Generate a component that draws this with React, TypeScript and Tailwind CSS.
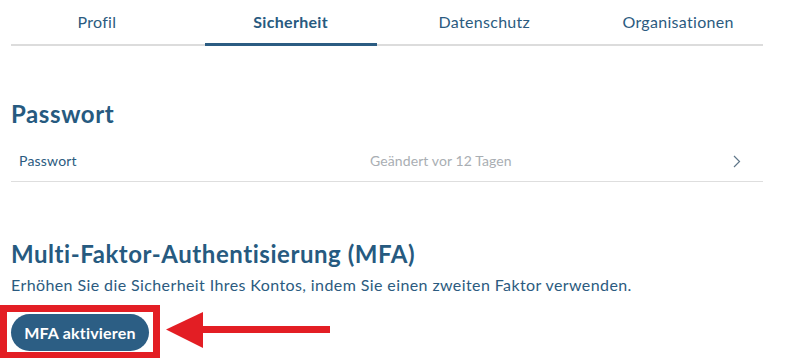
import React from "react";

const tabs = ["Profil", "Sicherheit", "Datenschutz", "Organisationen"];

export default function App() {
  return (
    <div
      className="relative w-[792px] h-[364px] bg-white overflow-hidden text-[#2b5b80]"
      style={{ fontFamily: "Lato, 'Noto Sans', sans-serif" }}
    >
      {/* Tabs */}
      <div className="ml-[11px] w-[752px] border-b-2 border-[#dcdcdc]">
        <div className="-ml-[11px] w-[775px] flex -mb-[2px]">
          {tabs.map((t, i) => (
            <div key={t} className="flex-1 flex flex-col items-center">
              <div
                className={`pt-[10px] h-[43px] text-[16px] leading-[24px] tracking-[0.3px] ${
                  i === 1 ? "font-bold text-[#285a80]" : "font-normal"
                }`}
              >
                {t}
              </div>
              <div
                className={`self-stretch mx-[11px] h-[3px] ${
                  i === 1 ? "bg-[#2b5c82]" : "bg-transparent"
                }`}
              />
            </div>
          ))}
        </div>
      </div>

      {/* Passwort section */}
      <div className="px-[11px] w-[774px]">
        <h2 className="mt-[53px] text-[24px] leading-[30px] font-bold tracking-[0.6px] text-[#265a80]">
          Passwort
        </h2>
        <div className="mt-[12px] h-[41px] flex items-center border-b border-[#dedede] pl-[8px] pr-[22px]">
          <div className="w-[351px] text-[14px] leading-[20px] tracking-[0.2px] text-[#2b5b80]">Passwort</div>
          <div className="flex-1 text-[14px] leading-[20px] tracking-[0.1px] text-[#a9aeb3]">
            Geändert vor 12 Tagen
          </div>
          <svg width="8" height="13" viewBox="0 0 8 13" className="mt-[1px]">
            <path d="M1 1 L6.5 6.5 L1 12" fill="none" stroke="#5f7689" strokeWidth="1.2" />
          </svg>
        </div>

        {/* MFA section */}
        <h2 className="mt-[57px] text-[24px] leading-[30px] font-bold tracking-[0.55px] text-[#265a80]">
          Multi-Faktor-Authentisierung (MFA)
        </h2>
        <p className="mt-[5px] text-[16px] leading-[22px] tracking-[0.4px] text-[#2b5b80]">
          Erhöhen Sie die Sicherheit Ihres Kontos, indem Sie einen zweiten Faktor verwenden.
        </p>
        <button className="mt-[18px] h-[37px] w-[138px] rounded-full bg-[#2c5e84] text-white text-[16px] font-bold leading-[20px] tracking-[0.2px]">
          MFA aktivieren
        </button>
      </div>

      {/* Annotation overlay */}
      <div className="absolute left-0 top-[305px] w-[160px] h-[53px] border-[7px] border-b-[6px] border-[#e31e24]" />
      <svg className="absolute left-[160px] top-[308px]" width="180" height="44" viewBox="0 0 180 44">
        <polygon points="6,21.5 43,4 43,40" fill="#e31e24" />
        <rect x="40" y="18" width="130" height="7" fill="#e31e24" />
      </svg>
    </div>
  );
}
